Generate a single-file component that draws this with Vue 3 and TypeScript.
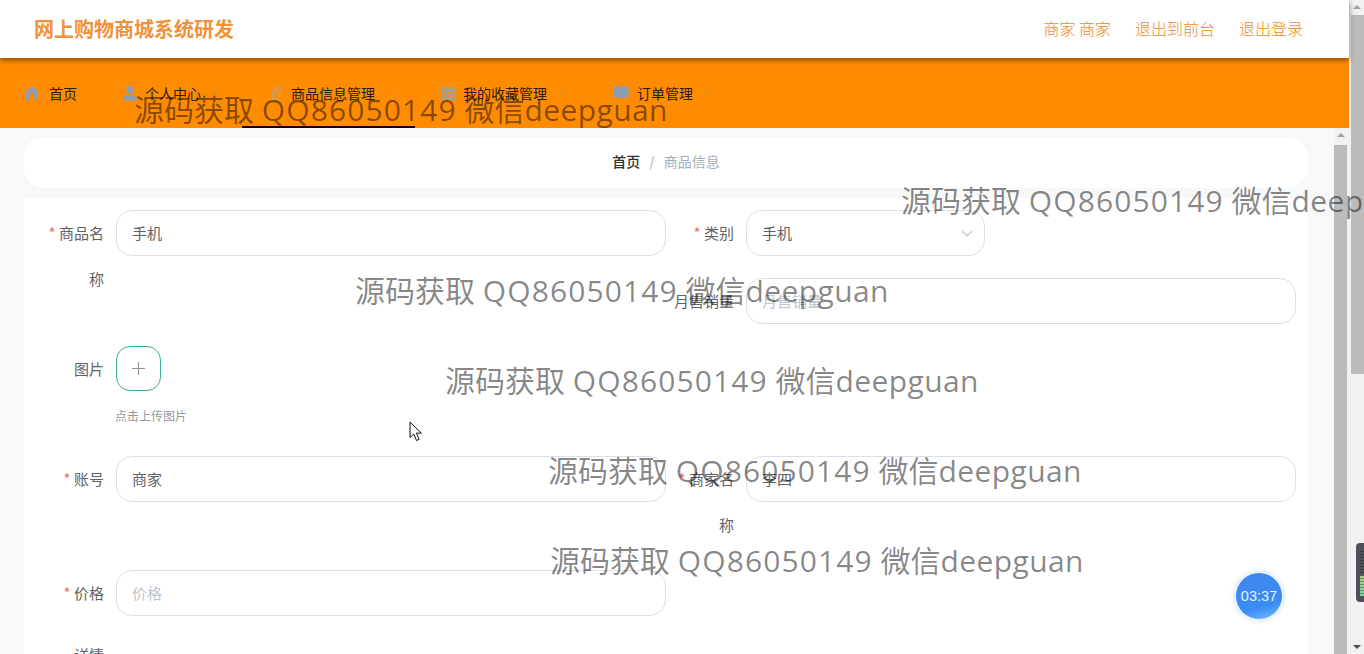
<script setup lang="ts">
const marks = [
  { x: 513, y: 0 },
  { x: 134, y: 88 },
  { x: 901, y: 179 },
  { x: 355, y: 269 },
  { x: 445, y: 359 },
  { x: 548, y: 449 },
  { x: 550, y: 539 },
]
</script>

<template>
  <div class="page">
    <div class="main">
      <header class="topbar">
        <div class="brand">网上购物商城系统研发</div>
        <div class="links">
          <span>商家 商家</span>
          <span>退出到前台</span>
          <span>退出登录</span>
        </div>
      </header>

      <nav class="menu">
        <div class="item home">
          <svg class="ico" viewBox="0 0 16 16"><path d="M8 1 0.5 8 2 9v6h3.500v-4a2.500 2.500 0 0 1 5 0v4H14V9l1.500-1z" /></svg>
          <span>首页</span>
        </div>
        <div class="item user">
          <svg class="ico" viewBox="0 0 16 16"><circle cx="8" cy="4.500" r="3.800" /><path d="M1 15.500c0-4.500 3-6 7-6s7 1.500 7 6z" /></svg>
          <span>个人中心</span>
          <svg class="chev" viewBox="0 0 10 6"><path d="M1 1l4 4 4-4" /></svg>
        </div>
        <div class="item goods">
          <svg class="ico line" viewBox="0 0 16 16"><path d="M10 1.500 14 3.500 10 14.500H4V6.500zM4.500 13 10.500 3" /></svg>
          <span>商品信息管理</span>
          <svg class="chev" viewBox="0 0 10 6"><path d="M1 1l4 4 4-4" /></svg>
        </div>
        <div class="item fav">
          <svg class="ico muted" viewBox="0 0 16 16"><path d="M1 2h14v13H1zM3 6v2h2V6zm4 0v2h2V6zm4 0v2h2V6zM3 10v2h2v-2zm4 0v2h2v-2zm4 0v2h2v-2z" fill-rule="evenodd" /></svg>
          <span>我的收藏管理</span>
          <svg class="chev" viewBox="0 0 10 6"><path d="M1 1l4 4 4-4" /></svg>
        </div>
        <div class="item order">
          <svg class="ico" viewBox="0 0 16 16"><path d="M2 1.500h12a1.500 1.500 0 0 1 1.500 1.500v8a1.500 1.500 0 0 1-1.500 1.500H9L6 15v-2.500H2A1.500 1.500 0 0 1 .5 11V3A1.500 1.500 0 0 1 2 1.500z" /></svg>
          <span>订单管理</span>
          <svg class="chev" viewBox="0 0 10 6"><path d="M1 1l4 4 4-4" /></svg>
        </div>
      </nav>

      <div class="body">
        <div class="scroll">
          <div class="crumb">
            <b>首页</b>
            <i>/</i>
            <span>商品信息</span>
          </div>

          <form class="form" @submit.prevent>
            <div class="field name">
              <label class="req">商品名称</label>
              <div class="input">手机</div>
            </div>
            <div class="field">
              <label class="req">类别</label>
              <div class="input select">
                手机
                <svg viewBox="0 0 12 7"><path d="M1 1l5 5 5-5" /></svg>
              </div>
            </div>
            <div class="field month">
              <label>月售销量</label>
              <div class="input hint">月售销量</div>
            </div>
            <div class="field wide">
              <label>图片</label>
              <div class="upload-wrap">
                <div class="upload"><span class="plus"></span></div>
                <div class="tip">点击上传图片</div>
              </div>
            </div>
            <div class="field">
              <label class="req">账号</label>
              <div class="input">商家</div>
            </div>
            <div class="field name">
              <label class="req">商家名称</label>
              <div class="input">李四</div>
            </div>
            <div class="field price">
              <label class="req">价格</label>
              <div class="input hint">价格</div>
            </div>
            <div class="field wide detail">
              <label>详情</label>
            </div>
          </form>
        </div>
        <div class="bar inner">
          <span class="arrow up"></span>
          <span class="thumb"></span>
        </div>
      </div>
    </div>

    <div class="bar outer">
      <span class="arrow up"></span>
      <span class="thumb"></span>
      <span class="arrow down"></span>
    </div>

    <div class="underline"></div>
    <div v-for="m in marks" :key="m.x" class="mark" :style="{ left: m.x + 'px', top: m.y + 'px' }">源码获取 <span class="qq">QQ86050149</span> 微信<span class="wx">deepguan</span></div>

    <div class="timer">03:37</div>
    <div class="meter"></div>

    <svg class="cursor" viewBox="0 0 14 21">
      <path d="M1 1v15.500l3.800-3.500 2.700 6.500 2.600-1.100-2.700-6.300h5z" />
    </svg>
  </div>
</template>

<style>
html, body { margin: 0; overflow: hidden; background: #fff; }
</style>

<style scoped>
.page {
  position: relative;
  width: 1364px;
  height: 654px;
  overflow: hidden;
  display: flex;
  font-family: "Noto Sans CJK SC", "Noto Sans", sans-serif;
  background: #fff;
}
.main {
  width: 1349px;
  height: 654px;
  display: flex;
  flex-direction: column;
  flex: none;
}
.topbar {
  position: relative;
  z-index: 2;
  flex: none;
  height: 58px;
  box-sizing: border-box;
  display: flex;
  align-items: center;
  justify-content: space-between;
  padding: 0 46px 2px 34px;
  background: #fff;
  box-shadow: 0 2px 5px rgba(60, 30, 0, .65);
  color: #ea8a2a;
}
.brand {
  font-size: 20px;
  font-weight: 700;
  color: #f0923a;
}
.links { display: flex; gap: 24px; font-size: 16px; font-weight: 300; }
.menu {
  flex: none;
  height: 70px;
  display: flex;
  align-items: center;
  padding: 0 0 0 24px;
  box-sizing: border-box;
  background: #ff8c00;
  font-size: 14px;
  color: #2b1c10;
}
.item { display: flex; align-items: center; height: 22px; margin-top: -1px; }
.item span { display: block; line-height: 22px; }
.ico { width: 16px; height: 16px; margin-right: 7px; fill: #8c9cb4; }
.ico.muted { fill: #a8a08c; }
.ico.line { fill: none; stroke: #b8a58a; stroke-width: 1.200; }
.chev { width: 9px; height: 6px; margin-left: 10px; fill: none; stroke: #c08a50; stroke-width: 1; }
.home .ico { margin-right: 9px; }
.home { margin-right: 45px; }
.user { margin-right: 48px; }
.goods { margin-right: 46px; }
.fav { margin-right: 47px; }
.order .ico { margin-right: 8px; }
.body {
  flex: 1;
  min-height: 0;
  display: flex;
  background: #f7f8fa;
}
.scroll {
  width: 1334px;
  flex: none;
  padding: 9px 26px 0 24px;
  box-sizing: border-box;
  overflow: hidden;
}
.crumb {
  height: 51px;
  padding-bottom: 3px;
  box-sizing: border-box;
  display: flex;
  align-items: center;
  justify-content: center;
  gap: 8px;
  background: #fff;
  border-radius: 20px;
  font-size: 14px;
  color: #a3acb9;
}
.crumb b { font-weight: 500; color: #303133; }
.crumb i { font-style: normal; font-weight: 700; color: #c0c4cc; margin: 0 1px; }
.form {
  margin-top: 10px;
  padding: 12px 12px 0 12px;
  background: #fff;
  display: grid;
  grid-template-columns: 630px 630px;
  grid-template-rows: 46px 46px 88px 46px 24px 46px 46px;
  row-gap: 22px;
  height: 500px;
  box-sizing: border-box;
  overflow: hidden;
  align-content: start;
}
.field { display: flex; align-items: flex-start; min-width: 0; }
.field label {
  flex: none;
  width: 80px;
  box-sizing: border-box;
  padding-right: 12px;
  text-align: right;
  font-size: 15px;
  line-height: 46px;
  color: #606266;
}
.req::before { content: "* "; color: #f56c6c; }
.name { grid-row: span 2; }
.month { grid-column: 2; }
.wide { grid-column: 1 / 3; }
.price { grid-column: 1; grid-row: 6; }
.detail { grid-row: 7; }
.input {
  flex: none;
  width: 550px;
  height: 46px;
  box-sizing: border-box;
  padding: 0 15px;
  border: 1px solid #dcdfe6;
  border-radius: 16px;
  background: #fff;
  font-size: 15px;
  line-height: 44px;
  color: #606266;
}
.select {
  width: 239px;
  display: flex;
  align-items: center;
  justify-content: space-between;
}
.select svg { width: 12px; height: 7px; margin-right: -4px; fill: none; stroke: #c0c4cc; stroke-width: 1.200; }
.hint { color: #c0c4cc; }
.upload-wrap { display: flex; flex-direction: column; }
.upload {
  width: 45px;
  height: 45px;
  box-sizing: border-box;
  border: 1px solid #3fae98;
  border-radius: 14px;
  display: flex;
  align-items: center;
  justify-content: center;
}
.plus { position: relative; display: block; width: 13px; height: 13px; }
.plus::before, .plus::after { content: ""; position: absolute; background: #8c939d; }
.plus::before { left: 6px; top: 0; width: 1px; height: 13px; }
.plus::after { left: 0; top: 6px; width: 13px; height: 1px; }
.tip { margin: 16px 0 0 -1px; font-size: 12px; line-height: 18px; color: #999; }
.detail label { line-height: 34px; }
.bar {
  position: relative;
  flex: none;
  width: 15px;
  background: #f1f1f1;
}
.bar .thumb { position: absolute; display: block; background: #bcbbbb; }
.arrow { position: absolute; width: 0; height: 0; border-left: 4px solid transparent; border-right: 4px solid transparent; }
.arrow.up { top: 5px; left: 3px; border-bottom: 4px solid #a0a0a0; }
.arrow.down { bottom: 5px; left: 4px; border-top: 4px solid #505050; }
.inner .thumb { left: 0; top: 17px; right: 2px; bottom: 0; }
.outer { height: 654px; }
.outer .thumb { left: 2px; top: 15px; right: 0; height: 359px; }
.outer .arrow.up { left: 4px; }
.underline {
  position: absolute;
  left: 242px;
  top: 126px;
  width: 173px;
  height: 2px;
  background: #140300;
}
.mark {
  position: absolute;
  white-space: nowrap;
  font-family: "Open Sans", "Noto Sans CJK SC", sans-serif;
  font-size: 30px;
  line-height: 44px;
  color: rgba(0, 0, 0, .48);
  pointer-events: none;
}
.qq { letter-spacing: 1.100px; }
.wx { letter-spacing: .4px; }
.timer {
  position: absolute;
  left: 1236px;
  top: 573px;
  width: 46px;
  height: 46px;
  border-radius: 50%;
  background: linear-gradient(165deg, #3f86ec, #3a8cf5 70%, #78bcff);
  box-shadow: 0 0 0 2px #e6f4ff, 0 0 5px 2px rgba(150, 190, 235, .4);
  color: #e6f2ff;
  font-family: "Liberation Sans", sans-serif;
  font-size: 14.500px;
  line-height: 46px;
  text-align: center;
}
.meter {
  position: absolute;
  left: 1356px;
  top: 543px;
  width: 12px;
  height: 59px;
  border-radius: 4px;
  background: #4d5058;
}
.meter::after {
  content: "";
  position: absolute;
  left: 4px;
  top: 6px;
  width: 8px;
  height: 47px;
  background:
    repeating-linear-gradient(transparent 0 2px, rgba(0, 0, 0, .3) 2px 3px),
    linear-gradient(#50535a 55%, #a9cf80 58%, #7fd0a8 100%);
}
.cursor {
  position: absolute;
  left: 409px;
  top: 421px;
  width: 14px;
  height: 21px;
}
.cursor path { fill: #fff; stroke: #111; stroke-width: 1; }
</style>
